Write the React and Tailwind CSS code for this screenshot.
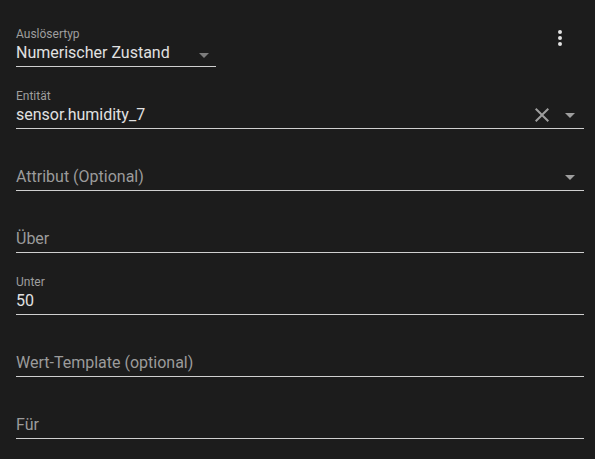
import React from "react";

const Arrow = ({ className = "" }) => (
  <svg width="24" height="24" viewBox="0 0 24 24" className={className}>
    <path d="M7 10l5 5 5-5z" fill="currentColor" />
  </svg>
);

const Field = ({ label, value, placeholder, children, className = "" }) => (
  <div
    className={`h-[56px] box-border flex flex-col border-b border-[#cfcfcf] pt-[15px] ${className}`}
  >
    <div className="h-[15px] text-[12px] leading-[16px] text-[#9e9e9e]">{label}</div>
    <div className="h-[24px] flex items-center">
      <div
        className={`flex-1 text-[16px] leading-[24px] ${
          value ? "text-[#e1e1e1]" : "text-[#9b9b9b]"
        }`}
      >
        {value || placeholder}
      </div>
      {children}
    </div>
  </div>
);

export default function App() {
  return (
    <div
      className="w-[595px] h-[459px] bg-[#1c1c1c] pl-[16px] pr-[11px] pt-[11px] flex flex-col gap-[6px] overflow-hidden"
      style={{ fontFamily: "Roboto, 'Noto Sans', sans-serif" }}
    >
      <div className="flex items-start justify-between">
        <Field label="Auslösertyp" value="Numerischer Zustand" className="w-[200px]">
          <Arrow className="text-[#7c7c7c] mt-[4px]" />
        </Field>
        <div className="w-[48px] h-[48px] mt-[3px] flex items-center justify-center text-[#e1e1e1]">
          <svg width="24" height="24" viewBox="0 0 24 24">
            <path
              fill="currentColor"
              d="M12,16A2,2 0 0,1 14,18A2,2 0 0,1 12,20A2,2 0 0,1 10,18A2,2 0 0,1 12,16M12,10A2,2 0 0,1 14,12A2,2 0 0,1 12,14A2,2 0 0,1 10,12A2,2 0 0,1 12,10M12,4A2,2 0 0,1 14,6A2,2 0 0,1 12,8A2,2 0 0,1 10,6A2,2 0 0,1 12,4Z"
            />
          </svg>
        </div>
      </div>
      <Field label="Entität" value="sensor.humidity_7">
        <svg width="24" height="24" viewBox="0 0 24 24" className="text-[#9e9e9e]">
          <path
            fill="currentColor"
            d="M19,6.41L17.59,5L12,10.59L6.41,5L5,6.41L10.59,12L5,17.59L6.41,19L12,13.41L17.59,19L19,17.59L13.41,12L19,6.41Z"
          />
        </svg>
        <Arrow className="text-[#9e9e9e] ml-[4px] mr-[2px]" />
      </Field>
      <Field placeholder="Attribut (Optional)">
        <Arrow className="text-[#9e9e9e] mr-[2px]" />
      </Field>
      <Field placeholder="Über" />
      <Field label="Unter" value="50" />
      <Field placeholder="Wert-Template (optional)" />
      <Field placeholder="Für" />
    </div>
  );
}
